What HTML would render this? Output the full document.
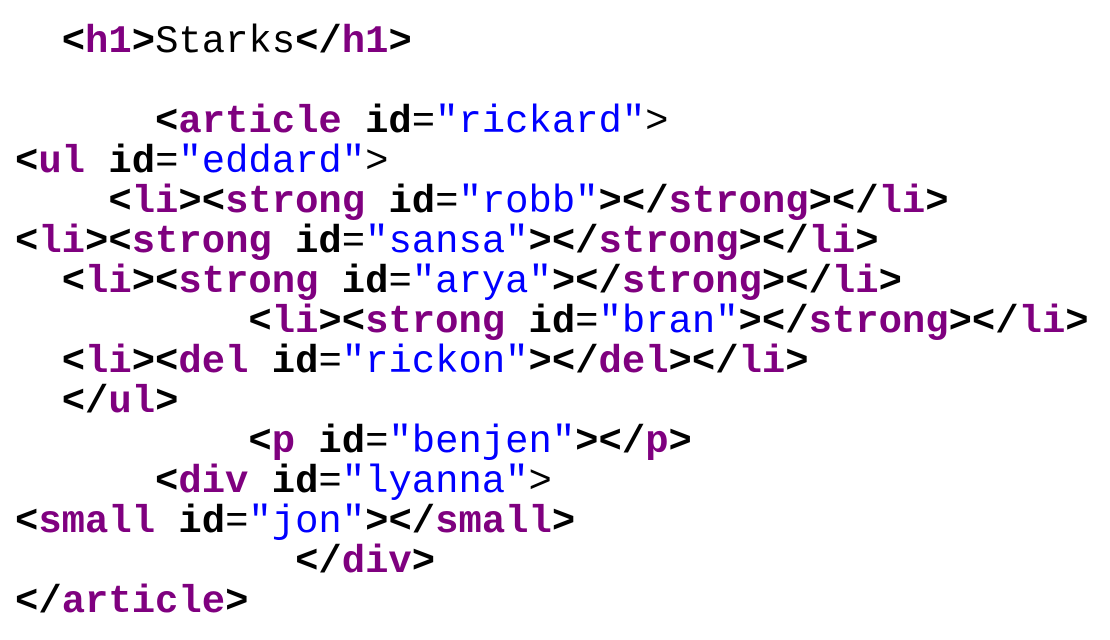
<!DOCTYPE html>
<html><head><meta charset="utf-8"><style>
html,body{margin:0;padding:0;background:#fff;width:1110px;height:640px;overflow:hidden}
pre{margin:0;position:absolute;left:15px;top:22px;font-family:"Liberation Mono",monospace;font-size:38.9px;line-height:40px;color:#000}
.t{color:#7f007f;font-weight:bold}
.b{font-weight:bold}
.a{font-weight:bold}
.s{color:#0000ff}
</style></head><body><pre>  <span class="b">&lt;</span><span class="t">h1</span><span class="b">&gt;</span>Starks<span class="b">&lt;/</span><span class="t">h1</span><span class="b">&gt;</span>

      <span class="b">&lt;</span><span class="t">article</span> <span class="a">id</span>=<span class="s">"rickard"</span>&gt;
<span class="b">&lt;</span><span class="t">ul</span> <span class="a">id</span>=<span class="s">"eddard"</span>&gt;
    <span class="b">&lt;</span><span class="t">li</span><span class="b">&gt;&lt;</span><span class="t">strong</span> <span class="a">id</span>=<span class="s">"robb"</span><span class="b">&gt;&lt;/</span><span class="t">strong</span><span class="b">&gt;&lt;/</span><span class="t">li</span><span class="b">&gt;</span>
<span class="b">&lt;</span><span class="t">li</span><span class="b">&gt;&lt;</span><span class="t">strong</span> <span class="a">id</span>=<span class="s">"sansa"</span><span class="b">&gt;&lt;/</span><span class="t">strong</span><span class="b">&gt;&lt;/</span><span class="t">li</span><span class="b">&gt;</span>
  <span class="b">&lt;</span><span class="t">li</span><span class="b">&gt;&lt;</span><span class="t">strong</span> <span class="a">id</span>=<span class="s">"arya"</span><span class="b">&gt;&lt;/</span><span class="t">strong</span><span class="b">&gt;&lt;/</span><span class="t">li</span><span class="b">&gt;</span>
          <span class="b">&lt;</span><span class="t">li</span><span class="b">&gt;&lt;</span><span class="t">strong</span> <span class="a">id</span>=<span class="s">"bran"</span><span class="b">&gt;&lt;/</span><span class="t">strong</span><span class="b">&gt;&lt;/</span><span class="t">li</span><span class="b">&gt;</span>
  <span class="b">&lt;</span><span class="t">li</span><span class="b">&gt;&lt;</span><span class="t">del</span> <span class="a">id</span>=<span class="s">"rickon"</span><span class="b">&gt;&lt;/</span><span class="t">del</span><span class="b">&gt;&lt;/</span><span class="t">li</span><span class="b">&gt;</span>
  <span class="b">&lt;/</span><span class="t">ul</span><span class="b">&gt;</span>
          <span class="b">&lt;</span><span class="t">p</span> <span class="a">id</span>=<span class="s">"benjen"</span><span class="b">&gt;&lt;/</span><span class="t">p</span><span class="b">&gt;</span>
      <span class="b">&lt;</span><span class="t">div</span> <span class="a">id</span>=<span class="s">"lyanna"</span>&gt;
<span class="b">&lt;</span><span class="t">small</span> <span class="a">id</span>=<span class="s">"jon"</span><span class="b">&gt;&lt;/</span><span class="t">small</span><span class="b">&gt;</span>
            <span class="b">&lt;/</span><span class="t">div</span><span class="b">&gt;</span>
<span class="b">&lt;/</span><span class="t">article</span><span class="b">&gt;</span></pre></body></html>
